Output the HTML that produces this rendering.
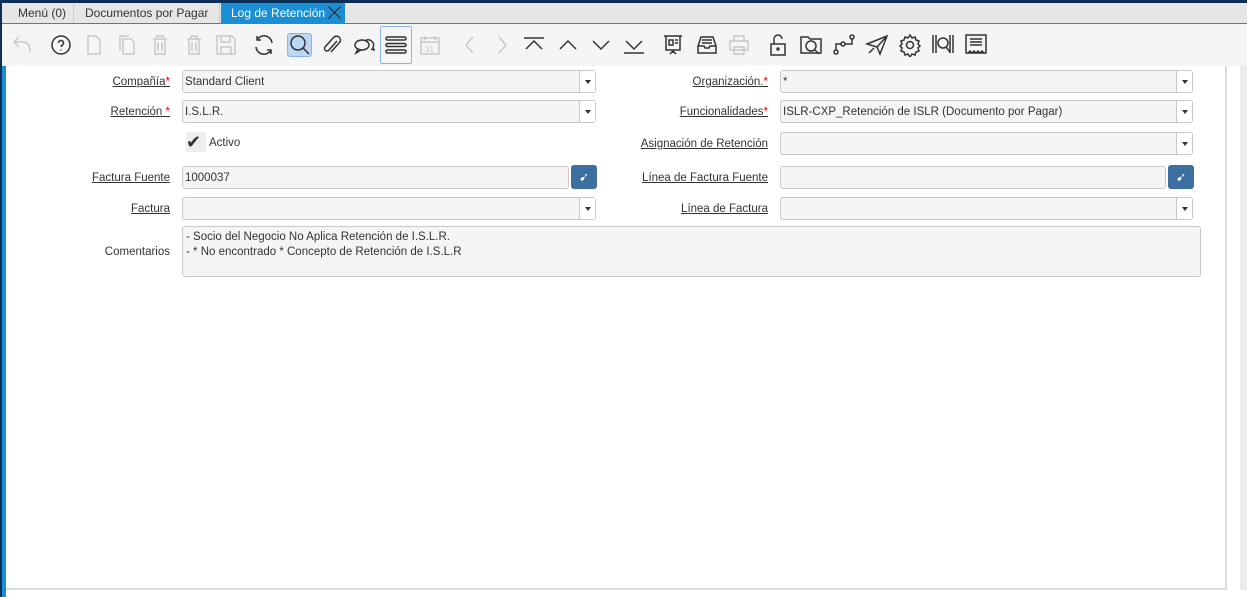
<!DOCTYPE html>
<html><head><meta charset="utf-8"><style>
*{margin:0;padding:0;box-sizing:border-box}
body{width:1247px;height:597px;overflow:hidden;background:#fff;font-family:"Liberation Sans",sans-serif;font-size:12px;color:#333;position:relative}
.a{position:absolute}
.tab{position:absolute;top:3px;height:21px;line-height:21px;font-size:12px;color:#333;padding-left:10px}
.lbl{position:absolute;font-size:11.5px;color:#333;text-align:right;text-decoration:underline}
.lbl b{color:#d00;font-weight:normal;text-decoration:none}
.fld{position:absolute;height:23px;border:1px solid #c8c8c8;border-radius:3px;background:#f5f5f5;font-size:11.5px;line-height:23px;padding-left:2px;color:#333}
.dd{position:absolute;right:0;top:0;width:16px;height:21px;border-left:1px solid #c8c8c8;background:#fff}
.dd:after{content:"";position:absolute;left:5px;top:9px;border-left:3px solid transparent;border-right:3px solid transparent;border-top:4px solid #333}
.btn{position:absolute;width:26px;height:24px;background:#3c6fa0;border-radius:3px;color:#fff;text-align:center;line-height:24px;font-size:12px}
svg.i{position:absolute;top:33px;width:24px;height:24px;fill:none;stroke:#333;stroke-width:1.5}
svg.g{stroke:#c8c8c8}
.x{display:inline-block;position:relative;width:13px;height:13px;vertical-align:-2px;margin-left:3px}
.x:before,.x:after{content:"";position:absolute;left:6px;top:-2px;width:1px;height:17px;background:#222;transform:rotate(45deg)}
.x:after{transform:rotate(-45deg)}
</style></head><body>
<div class="a" style="left:0;top:0;width:1247px;height:3px;background:#0c2f57"></div>
<div class="a" style="left:0;top:3px;width:1247px;height:21px;background:#e6e6e6"></div>
<div class="a" style="left:0;top:3px;width:2px;height:594px;background:#0c2f57"></div>
<div class="tab" style="left:8px;width:66px;border-right:1px solid #ccc">Menú (0)</div>
<div class="tab" style="left:75px;width:145px;border-right:1px solid #ccc">Documentos por Pagar<span class="x"></span></div>
<div class="tab" style="left:221px;width:124px;background:#1a8fd6;color:#fff">Log de Retención<span class="x"></span></div>
<div class="a" style="left:2px;top:23px;width:1245px;height:1px;background:#1a8fd6"></div>
<div class="a" style="left:2px;top:24px;width:1245px;height:42px;background:#f5f5f5"></div>
<div class="a" style="left:287px;top:33px;width:25px;height:24px;background:#bcd6f6;border:1px solid #8ab4e8;border-radius:3px"></div>
<div class="a" style="left:380px;top:26px;width:32px;height:38px;border:1px solid #8ab4e8;border-radius:2px"></div>
<svg class="i g" style="left:10px" viewBox="0 0 24 24"><path d="M4 9l5-5M4 9l5 5M4 9h9c5 0 7 4 7 10"/></svg>
<svg class="i" style="left:49px" viewBox="0 0 24 24"><circle cx="12" cy="12" r="9"/><path d="M9.5 10a2.5 2.5 0 1 1 3 2.4V14M12 16.5v1"/></svg>
<svg class="i g" style="left:82px" viewBox="0 0 24 24"><path d="M6 3h8l4 4v14H6z"/></svg>
<svg class="i g" style="left:115px" viewBox="0 0 24 24"><path d="M8 6h8l3 3v12H8zM5 18V3h9"/></svg>
<svg class="i g" style="left:148px" viewBox="0 0 24 24"><path d="M5 6h14M9 6V3h6v3M7 6v15h10V6M10 9v9M14 9v9"/></svg>
<svg class="i g" style="left:182px" viewBox="0 0 24 24"><path d="M5 6h14M9 6V3h6v3M7 6v15h10V6M10 9v9M14 9v9"/></svg>
<svg class="i g" style="left:214px" viewBox="0 0 24 24"><path d="M3 3h15l3 3v15H3zM7 3v6h9V3M7 14h10v7H7z"/></svg>
<svg class="i" style="left:252px" viewBox="0 0 24 24"><path d="M20 10a8 8 0 0 0-15-3M4 14a8 8 0 0 0 15 3M5 3v4h4M19 21v-4h-4"/></svg>
<svg class="i" style="left:288px" viewBox="0 0 24 24"><circle cx="10" cy="10" r="7"/><path d="M15 15l6 6"/></svg>
<svg class="i" style="left:320px" viewBox="0 0 24 24"><path d="M17 8l-8 9a2.5 2.5 0 0 1-4-3l9-10a4 4 0 0 1 6 5l-9 10"/></svg>
<svg class="i" style="left:352px" viewBox="0 0 24 24"><ellipse cx="10" cy="12" rx="7" ry="5"/><path d="M6 16l-2 4 5-3M14 7a6 5 0 0 1 7 7l1 3-3-1"/></svg>
<svg class="i" style="left:384px" viewBox="0 0 24 24"><rect x="2" y="4" width="20" height="3" rx="1.5"/><rect x="2" y="10.5" width="20" height="3" rx="1.5"/><rect x="2" y="17" width="20" height="3" rx="1.5"/></svg>
<svg class="i g" style="left:418px" viewBox="0 0 24 24"><path d="M3 5h18v16H3zM3 9h18M7 3v4M17 3v4"/><text x="7" y="19" font-size="8" fill="#c8c8c8" stroke="none">31</text></svg>
<svg class="i g" style="left:458px" viewBox="0 0 24 24"><path d="M15 4l-7 8 7 8"/></svg>
<svg class="i g" style="left:490px" viewBox="0 0 24 24"><path d="M9 4l7 8-7 8"/></svg>
<svg class="i" style="left:522px" viewBox="0 0 24 24"><path d="M2 5h20M4 16l8-8 8 8"/></svg>
<svg class="i" style="left:556px" viewBox="0 0 24 24"><path d="M4 16l8-8 8 8"/></svg>
<svg class="i" style="left:589px" viewBox="0 0 24 24"><path d="M4 8l8 8 8-8"/></svg>
<svg class="i" style="left:622px" viewBox="0 0 24 24"><path d="M4 8l8 8 8-8M2 20h20"/></svg>
<svg class="i" style="left:661px" viewBox="0 0 24 24"><path d="M3 3h18M5 3v14h14V3M8 7h4v5H8zM14 7h3M14 10h3M12 17v3M9 21l3-3 3 3"/></svg>
<svg class="i" style="left:695px" viewBox="0 0 24 24"><path d="M3 13l3-9h12l3 9v7H3zM3 13h6l1 2h4l1-2h6M7 7h10M7 10h10"/></svg>
<svg class="i g" style="left:727px" viewBox="0 0 24 24"><path d="M7 8V3h10v5M3 8h18v9H3zM7 14h10v7H7z"/></svg>
<svg class="i" style="left:766px" viewBox="0 0 24 24"><path d="M5 11h14v11H5zM8 11V6a4 4 0 0 1 8 0"/><circle cx="12" cy="16" r="1"/></svg>
<svg class="i" style="left:799px" viewBox="0 0 24 24"><path d="M2 4h7l2 2h11v14H2z"/><circle cx="12" cy="13" r="5"/><path d="M16 17l4 4"/></svg>
<svg class="i" style="left:832px" viewBox="0 0 24 24"><circle cx="4" cy="19" r="2"/><circle cx="11" cy="11" r="2"/><circle cx="20" cy="4" r="2"/><path d="M4 17v-6h5M13 11h7V6"/></svg>
<svg class="i" style="left:865px" viewBox="0 0 24 24"><path d="M2 11L22 3 15 21l-3-7zM12 14L22 3M4 20l5-5"/></svg>
<svg class="i" style="left:898px" viewBox="0 0 24 24"><circle cx="12" cy="12" r="3.5"/><path d="M12 2l2 3 3-1 1 3 3 1-1 3 2 2-2 2 1 3-3 1-1 3-3-1-2 3-2-3-3 1-1-3-3-1 1-3-2-2 2-2-1-3 3-1 1-3 3 1z"/></svg>
<svg class="i" style="left:931px" viewBox="0 0 24 24"><path d="M2 2v18M5 2v18M19 2v18M22 2v18"/><circle cx="12" cy="10" r="5"/><path d="M15 14l4 5"/></svg>
<svg class="i" style="left:964px" viewBox="0 0 24 24"><path d="M2 2h20v18H2zM6 6h12M6 9h12M6 12h12M4 20l2-2 2 2 2-2 2 2 2-2 2 2 2-2 2 2"/></svg>

<div class="a" style="left:2px;top:66px;width:4px;height:531px;background:#1a8fd6"></div>
<div class="a" style="left:1225px;top:66px;width:2px;height:523px;background:#ddd"></div>
<div class="a" style="left:6px;top:588px;width:1221px;height:2px;background:#ddd"></div>
<div class="a" style="left:1240px;top:66px;width:7px;height:524px;background:#ececec"></div>

<div class="lbl" style="left:80px;width:90px;top:76px">Compañía<b>*</b></div>
<div class="fld" style="left:182px;top:70px;width:414px">Standard Client<div class="dd"></div></div>
<div class="lbl" style="left:80px;width:90px;top:106px">Retención <b>*</b></div>
<div class="fld" style="left:182px;top:100px;width:414px">I.S.L.R.<div class="dd"></div></div>
<div class="a" style="left:186px;top:132px;width:20px;height:20px;background:#eee;font-size:18px;line-height:20px;color:#333">✔</div>
<div class="a" style="left:209px;top:137px;font-size:11.5px">Activo</div>
<div class="lbl" style="left:60px;width:110px;top:172px">Factura Fuente</div>
<div class="fld" style="left:182px;top:166px;width:387px">1000037</div>
<div class="btn" style="left:571px;top:165px">➹</div>
<div class="lbl" style="left:80px;width:90px;top:203px">Factura</div>
<div class="fld" style="left:182px;top:197px;width:414px"><div class="dd"></div></div>
<div class="a" style="left:80px;width:90px;top:246px;text-align:right;font-size:11.5px">Comentarios</div>
<div class="fld" style="left:182px;top:226px;width:1019px;height:51px;line-height:15px;padding:3px 0 0 3px">- Socio del Negocio No Aplica Retención de I.S.L.R.<br>- * No encontrado * Concepto de Retención de I.S.L.R</div>

<div class="lbl" style="left:620px;width:148px;top:76px">Organización.<b>*</b></div>
<div class="fld" style="left:780px;top:70px;width:413px">*<div class="dd"></div></div>
<div class="lbl" style="left:620px;width:148px;top:106px">Funcionalidades<b>*</b></div>
<div class="fld" style="left:780px;top:100px;width:413px">ISLR-CXP_Retención de ISLR (Documento por Pagar)<div class="dd"></div></div>
<div class="lbl" style="left:600px;width:168px;top:138px">Asignación de Retención</div>
<div class="fld" style="left:780px;top:132px;width:413px"><div class="dd"></div></div>
<div class="lbl" style="left:600px;width:168px;top:172px">Línea de Factura Fuente</div>
<div class="fld" style="left:780px;top:166px;width:386px"></div>
<div class="btn" style="left:1168px;top:165px">➹</div>
<div class="lbl" style="left:600px;width:168px;top:203px">Línea de Factura</div>
<div class="fld" style="left:780px;top:197px;width:413px"><div class="dd"></div></div>
</body></html>
